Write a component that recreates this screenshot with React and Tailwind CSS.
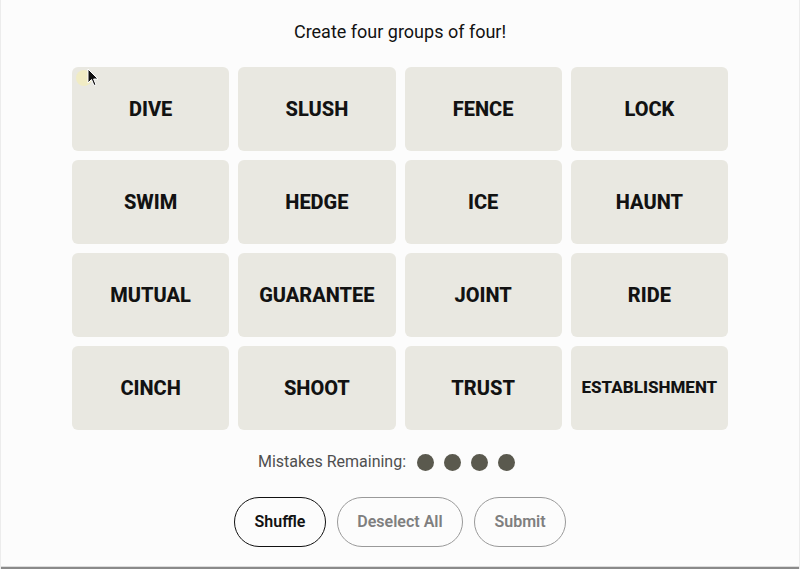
import { useState } from "react";

const WORDS = [
  "DIVE", "SLUSH", "FENCE", "LOCK",
  "SWIM", "HEDGE", "ICE", "HAUNT",
  "MUTUAL", "GUARANTEE", "JOINT", "RIDE",
  "CINCH", "SHOOT", "TRUST", "ESTABLISHMENT",
];

export default function App() {
  const [words] = useState(WORDS);
  const mistakes = 4;

  return (
    <div className="relative h-[569px] w-full overflow-hidden border-x border-[#ececec] bg-[#fcfcfc] font-['Roboto','Liberation_Sans',sans-serif] text-[#121212]">
      <div className="flex flex-col items-center pt-[21px]">
        <h1 className="text-[18px] leading-[22px] font-normal">Create four groups of four!</h1>

        <div className="mt-[24px] grid w-[656px] grid-cols-4 gap-x-[9px] gap-y-[9px]">
          {words.map((w) => (
            <button
              key={w}
              className={`flex h-[84px] items-center justify-center rounded-[6px] bg-[#e9e8e1] font-extrabold uppercase ${
                w.length > 10 ? "text-[17px]" : "text-[20px]"
              }`}
            >
              {w}
            </button>
          ))}
        </div>

        <div className="mt-[20px] mr-[27px] flex items-center gap-[10px] text-[16px] text-[#4f4f4f]">
          <span className="mr-[1px]">Mistakes Remaining:</span>
          {Array.from({ length: mistakes }).map((_, i) => (
            <span key={i} className="h-[17px] w-[17px] rounded-full bg-[#5a594e]" />
          ))}
        </div>

        <div className="mt-[23px] flex gap-[11px]">
          <button className="h-[50px] w-[92px] rounded-full border border-[#121212] text-[16px] font-semibold">
            Shuffle
          </button>
          <button className="h-[50px] w-[126px] rounded-full border border-[#9a9a9a] text-[16px] font-semibold text-[#7f7f7f]">
            Deselect All
          </button>
          <button className="h-[50px] w-[92px] rounded-full border border-[#9a9a9a] text-[16px] font-semibold text-[#7f7f7f]">
            Submit
          </button>
        </div>
      </div>

      {/* cursor over the first tile */}
      <div className="absolute left-[75px] top-[70px] h-[16px] w-[16px] rounded-full bg-[#f3eeb8] opacity-70" />
      <svg className="absolute left-[86px] top-[68px]" width="12" height="19" viewBox="0 0 12 19">
        <path d="M1 1 L1 15 L4.5 11.5 L7 17.5 L9 16.6 L6.6 11 L11 11 Z" fill="#111" stroke="#fff" strokeWidth="1" />
      </svg>

      <div className="absolute bottom-0 left-0 right-0 h-[3px] border-t border-[#dcdcdc] bg-[#8a8a8a]" />
    </div>
  );
}
